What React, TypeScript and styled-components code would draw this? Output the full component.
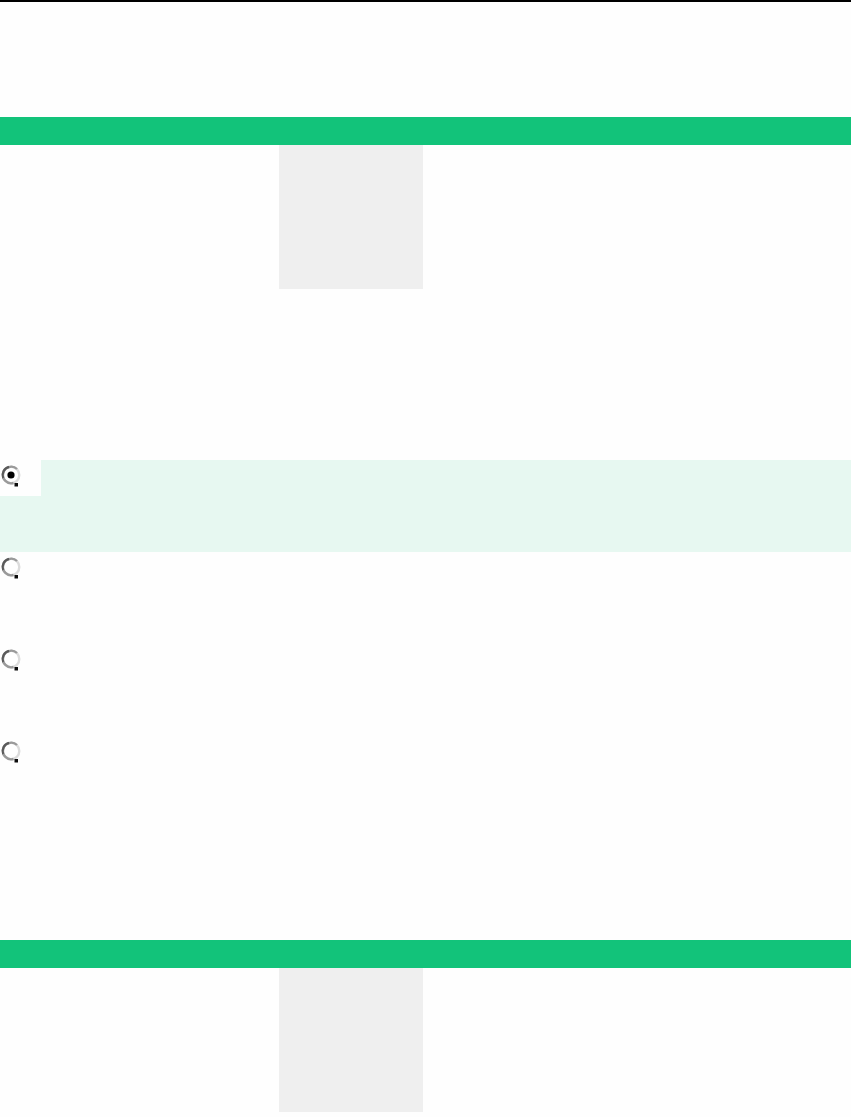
import React, { FC } from 'react';
import styled, { createGlobalStyle } from 'styled-components';

const GlobalStyle = createGlobalStyle`
    html, body {
        margin: 0;
        padding: 0;
        background: #fefefe;
        font-family: "Liberation Sans", Arial, sans-serif;
    }
`;

const Page = styled.div`
    display: flex;
    flex-direction: column;
    width: 100%;
    min-height: 1117px;
    background: #fefefe;
`;

const TopRule = styled.div`
    height: 2px;
    background: #000;
`;

const Gap = styled.div<{ $h: number }>`
    height: ${({ $h }) => $h}px;
    flex: none;
`;

const Banner = styled.div`
    height: 28px;
    background: #12c37a;
`;

const Strip = styled.div`
    display: flex;
    height: 144px;
    padding-left: 279px;
`;

const Tile = styled.div`
    width: 144px;
    height: 144px;
    background: #efefef;
`;

const OptionList = styled.div`
    display: flex;
    flex-direction: column;
`;

const OptionRow = styled.label<{ $active: boolean }>`
    display: flex;
    align-items: flex-start;
    height: 92px;
    background: ${({ $active }) => ($active ? '#e7f8f1' : 'transparent')};
    cursor: pointer;
`;

const RadioBox = styled.span<{ $active: boolean }>`
    display: flex;
    width: 41px;
    height: 36px;
    padding: 4px 0 0 0;
    box-sizing: border-box;
    background: ${({ $active }) => ($active ? '#fefefe' : 'transparent')};
`;

const Radio: FC<{ checked: boolean }> = ({ checked }) => (
    <svg width="24" height="26" viewBox="0 0 24 26">
        <circle cx="11" cy="11" r="8.3" fill="#fff" stroke="#dcdcdc" strokeWidth="2.4" />
        <path d="M17 5 A8.3 8.3 0 1 0 13.5 19" fill="none" stroke="#9a9a9a" strokeWidth="2.4" />
        <path d="M9 2.9 A8.3 8.3 0 0 0 3.2 14" fill="none" stroke="#5a5a5a" strokeWidth="2.2" />
        <rect x="14.5" y="19" width="3.5" height="3.5" fill="#0c0c0c" />
        {checked && <circle cx="11" cy="11" r="3.6" fill="#000" />}
    </svg>
);

const options = [0, 1, 2, 3];

const App: FC = () => {
    const selected = 0;
    return (
        <>
            <GlobalStyle />
            <Page>
                <TopRule />
                <Gap $h={115} />
                <Banner />
                <Strip>
                    <Tile />
                </Strip>
                <Gap $h={171} />
                <OptionList>
                    {options.map((o) => (
                        <OptionRow key={o} $active={o === selected}>
                            <RadioBox $active={o === selected}>
                                <Radio checked={o === selected} />
                            </RadioBox>
                        </OptionRow>
                    ))}
                </OptionList>
                <Gap $h={112} />
                <Banner />
                <Strip>
                    <Tile />
                </Strip>
            </Page>
        </>
    );
};

export default App;
